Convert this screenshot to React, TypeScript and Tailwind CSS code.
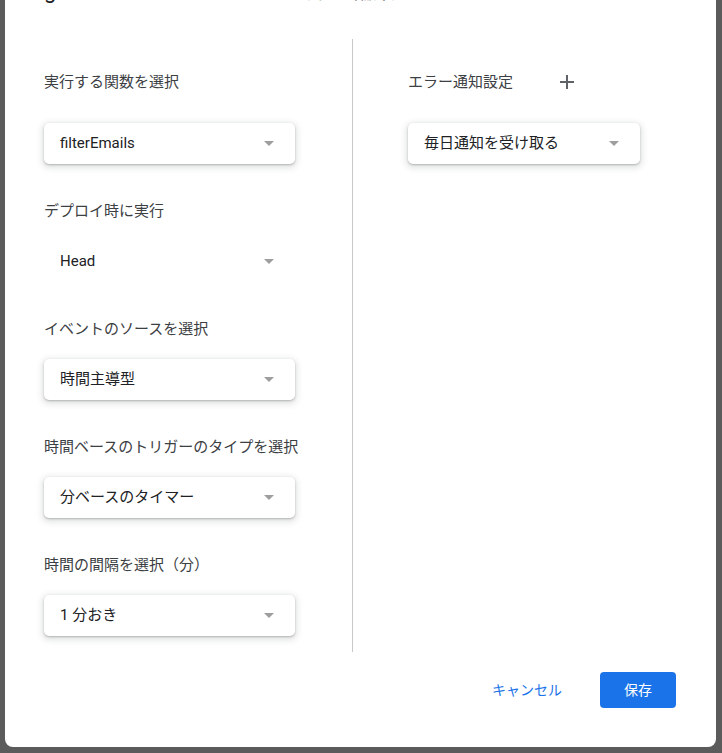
import type { ReactNode } from "react";

const font = "font-['Roboto','Noto_Sans_CJK_JP',sans-serif]";

function Arrow() {
  return (
    <span className="inline-block h-0 w-0 border-x-[5px] border-t-[5px] border-x-transparent border-t-[#9e9e9e]" />
  );
}

function Select({ value, width, flat }: { value: string; width: string; flat?: boolean }) {
  return (
    <div
      className={`${width} flex h-[41px] items-center justify-between rounded-[5px] bg-white pl-4 pr-[21px] ${
        flat
          ? ""
          : "shadow-[0_1px_2px_rgba(60,64,67,0.3),0_2px_6px_2px_rgba(60,64,67,0.15)]"
      }`}
    >
      <span className="text-[15px] text-[#202124]">{value}</span>
      <Arrow />
    </div>
  );
}

function Field({ label, children }: { label: string; children: ReactNode }) {
  return (
    <div className="mt-[37px] flex flex-col">
      <div className="h-5 text-[15px] leading-5 text-[#3c4043]">{label}</div>
      <div className="mt-[20px]">{children}</div>
    </div>
  );
}

export default function App() {
  return (
    <div className={`h-[753px] w-[722px] overflow-hidden bg-[#5b5b5b] ${font}`}>
      <div className="ml-[5px] flex h-[747px] w-[711px] flex-col overflow-hidden rounded-b-[8px] bg-white">
        {/* Title, scrolled mostly out of view */}
        <h1 className="-mt-[21px] h-6 pl-[39px] text-[22px] leading-6 text-[#202124]">
          gmailFilter のトリガーを追加・編集
        </h1>

        <div className="mt-[36px] flex">
          {/* Left column */}
          <div className="w-[348px] border-r border-[#c8c8c8] pb-4 pl-[39px] pt-[23px]">
            <div className="flex h-10 items-center text-[15px] text-[#3c4043]">
              実行する関数を選択
            </div>
            <div className="mt-[21px]">
              <Select value="filterEmails" width="w-[251px]" />
            </div>

            <Field label="デプロイ時に実行">
              <Select value="Head" width="w-[251px]" flat />
            </Field>

            <Field label="イベントのソースを選択">
              <Select value="時間主導型" width="w-[251px]" />
            </Field>

            <Field label="時間ベースのトリガーのタイプを選択">
              <Select value="分ベースのタイマー" width="w-[251px]" />
            </Field>

            <Field label="時間の間隔を選択（分）">
              <Select value="1 分おき" width="w-[251px]" />
            </Field>
          </div>

          {/* Right column */}
          <div className="flex-1 pl-[55px] pt-[23px]">
            <div className="flex h-10 items-center">
              <span className="text-[15px] text-[#3c4043]">エラー通知設定</span>
              <button className="ml-[34px] flex h-10 w-10 items-center justify-center">
                <svg width="14" height="14" viewBox="0 0 14 14">
                  <path d="M7 0v14M0 7h14" stroke="#5f6368" strokeWidth="2" />
                </svg>
              </button>
            </div>
            <div className="mt-[21px]">
              <Select value="毎日通知を受け取る" width="w-[232px]" />
            </div>
          </div>
        </div>

        {/* Footer */}
        <div className="mt-5 flex items-center justify-end gap-[22px] pr-[40px]">
          <button className="h-9 px-4 text-[14px] text-[#1a73e8]">キャンセル</button>
          <button className="h-9 w-[76px] rounded-[4px] bg-[#1a73e8] text-[14px] text-white">
            保存
          </button>
        </div>
      </div>
    </div>
  );
}
